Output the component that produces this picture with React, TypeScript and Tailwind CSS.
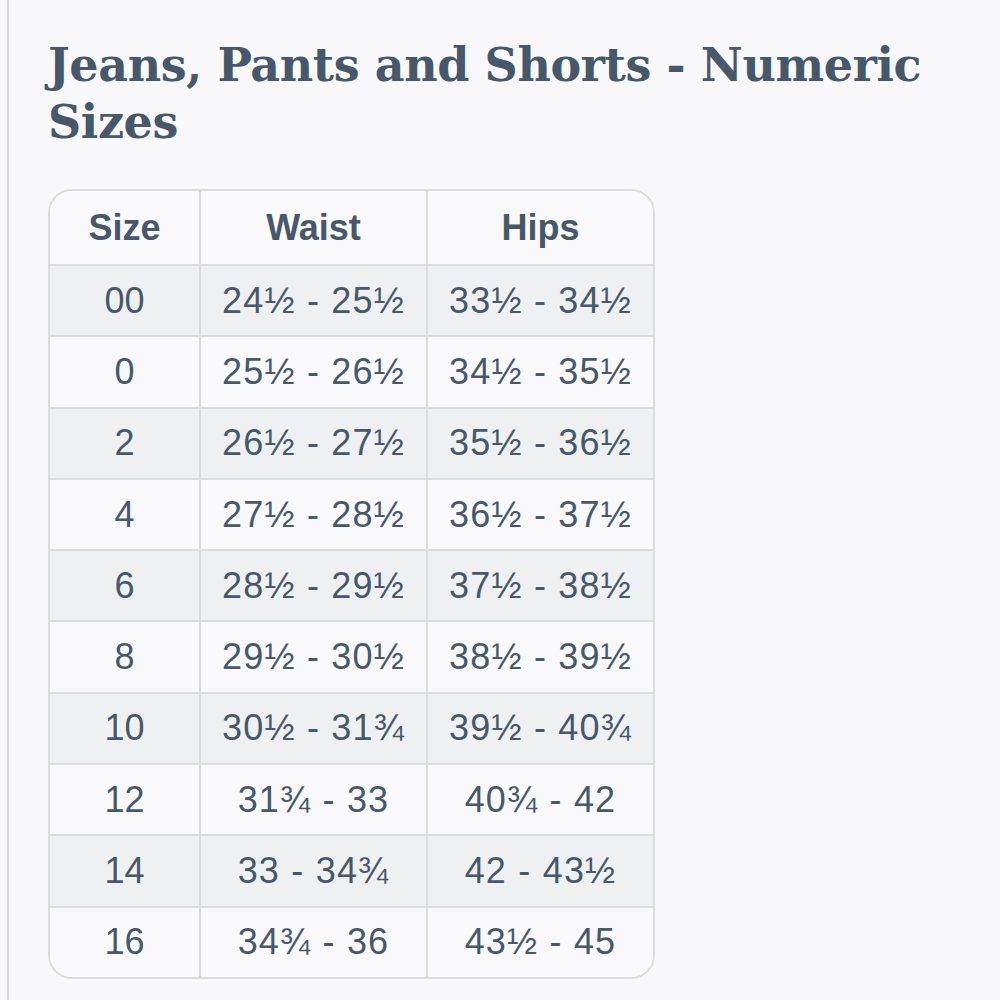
import React from "react";

const rows: [string, string, string][] = [
  ["00", "24½ - 25½", "33½ - 34½"],
  ["0", "25½ - 26½", "34½ - 35½"],
  ["2", "26½ - 27½", "35½ - 36½"],
  ["4", "27½ - 28½", "36½ - 37½"],
  ["6", "28½ - 29½", "37½ - 38½"],
  ["8", "29½ - 30½", "38½ - 39½"],
  ["10", "30½ - 31¾", "39½ - 40¾"],
  ["12", "31¾ - 33", "40¾ - 42"],
  ["14", "33 - 34¾", "42 - 43½"],
  ["16", "34¾ - 36", "43½ - 45"],
];

export default function App() {
  return (
    <div className="min-h-screen w-[1000px] h-[1000px] overflow-hidden bg-[#f8f8fa] flex">
      <div className="w-[7px] shrink-0" />
      <div className="w-[2px] shrink-0 bg-[#d9d9db]" />
      <div className="flex-1 pl-[39px] pt-[37px] text-[#46586a]">
        <h1 className="font-['DejaVu_Serif',serif] font-bold text-[46px] leading-[57px] tracking-[-0.4px] w-[900px]">
          Jeans, Pants and Shorts - Numeric Sizes
        </h1>
        <div className="mt-[38px] w-[607px] rounded-[24px] border-2 border-[#dcdcde] overflow-hidden font-['Liberation_Sans',Arial,sans-serif]">
          <div className="grid grid-cols-[151px_227px_1fr] h-[73px] bg-[#f9f9fb]">
            <div className="flex items-center justify-center font-bold text-[36px] border-r-2 border-[#dcdcde]">Size</div>
            <div className="flex items-center justify-center font-bold text-[36px] border-r-2 border-[#dcdcde]">Waist</div>
            <div className="flex items-center justify-center font-bold text-[36px]">Hips</div>
          </div>
          {rows.map((r, i) => (
            <div
              key={r[0]}
              className={`grid grid-cols-[151px_227px_1fr] h-[71.3px] border-t-2 border-[#dcdcde] ${
                i % 2 === 0 ? "bg-[#eef0f1]" : "bg-[#f9f9fb]"
              }`}
            >
              <div className="flex items-center justify-center text-[36px] border-r-2 border-[#dcdcde]">{r[0]}</div>
              <div className="flex items-center justify-center text-[36px] border-r-2 border-[#dcdcde] tracking-[1.2px]">{r[1]}</div>
              <div className="flex items-center justify-center text-[36px] tracking-[1.2px]">{r[2]}</div>
            </div>
          ))}
        </div>
      </div>
    </div>
  );
}
